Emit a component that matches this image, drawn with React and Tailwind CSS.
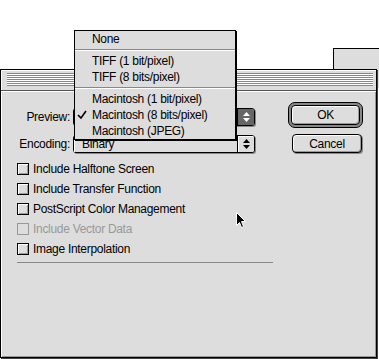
const font = "font-['Liberation_Sans',Arial,sans-serif] text-[12px] tracking-[-0.3px] leading-none";

const Arrows = ({ color }) => (
  <svg width="7" height="10" viewBox="0 0 7 10">
    <path d="M3.5 0 L7 4 L0 4 Z" fill={color} />
    <path d="M0 6 L7 6 L3.5 10 Z" fill={color} />
  </svg>
);

const Check = () => (
  <svg width="10" height="10" viewBox="0 0 10 10">
    <path d="M1 5 L4 8 L9 1" stroke="#000" strokeWidth="1.6" fill="none" />
  </svg>
);

const Cursor = () => (
  <svg width="11" height="17" viewBox="0 0 11 17">
    <path
      d="M0.5 0.5 L0.5 13.5 L3.5 10.5 L5.5 15.5 L7.5 14.5 L5.5 9.5 L9.5 9.5 Z"
      fill="#000"
      stroke="#fff"
      strokeWidth="1"
    />
  </svg>
);

const Popup = ({ label, value, pressed }) => (
  <div className="flex items-center">
    <div className="w-[72px] pr-[3px] text-right">{label}</div>
    <div className="flex h-[18px] w-[182px] rounded-[3px] border border-black bg-[#dddddd] shadow-[1px_1px_0_#888]">
      <div className="flex flex-1 items-center pl-[8px] shadow-[inset_1px_1px_0_#fff]">{value}</div>
      <div
        className={`flex w-[17px] items-center justify-center rounded-r-[2px] border-l border-black ${
          pressed ? "bg-[#666]" : "bg-[#dddddd] shadow-[inset_1px_1px_0_#fff]"
        }`}
      >
        <Arrows color={pressed ? "#fff" : "#000"} />
      </div>
    </div>
  </div>
);

const CheckRow = ({ label, disabled }) => (
  <div className="flex h-5 items-center gap-[4px]">
    <div
      className={`h-[12px] w-[12px] border ${
        disabled
          ? "border-[#999] bg-[#dddddd]"
          : "border-black bg-[#dddddd] shadow-[inset_1px_1px_0_#fff,inset_-1px_-1px_0_#999]"
      }`}
    />
    <span className={disabled ? "text-[#999]" : "text-black"}>{label}</span>
  </div>
);

const MenuItem = ({ children, checked }) => (
  <div className="relative flex h-4 items-center pl-[17px]">
    {checked && (
      <span className="absolute left-[2px] top-[3px]">
        <Check />
      </span>
    )}
    {children}
  </div>
);

const Sep = () => (
  <div className="flex h-[6px] items-center">
    <div className="h-[2px] w-full border-t border-[#888] border-b border-b-white" />
  </div>
);

export default function App() {
  return (
    <div className={`relative h-[359px] w-[379px] overflow-hidden bg-white text-black ${font}`}>
      {/* window behind */}
      <div className="absolute left-[333px] top-[48px] h-[40px] w-[60px] border-l border-t border-black bg-[#dddddd]" />

      {/* dialog */}
      <div className="absolute left-0 top-[69px] flex h-[289px] w-[377px] flex-col border border-black bg-[#dddddd] shadow-[1px_1px_0_#444]">
        <div className="h-[21px] border-b border-[#555] pt-[3px] shadow-[inset_1px_1px_0_#fff]">
          <div className="ml-[6px] mr-[3px] h-[13px] bg-[repeating-linear-gradient(to_bottom,#888_0,#888_1px,#fff_1px,#fff_2px)]" />
        </div>
        <div className="flex flex-1 shadow-[inset_1px_1px_0_#fff,inset_-1px_-1px_0_#999]">
          <div className="w-[287px]">
            <div className="mt-[17px]">
              <Popup label="Preview:" value="" pressed />
            </div>
            <div className="mt-[9px]">
              <Popup label="Encoding:" value="Binary" />
            </div>
            <div className="ml-[16px] mt-[6px]">
              <CheckRow label="Include Halftone Screen" />
              <CheckRow label="Include Transfer Function" />
              <CheckRow label="PostScript Color Management" />
              <CheckRow label="Include Vector Data" disabled />
              <CheckRow label="Image Interpolation" />
              <div className="mt-[3px] h-px w-[256px] bg-[#888]" />
            </div>
          </div>
          <div className="pt-[11px]">
            <div className="h-[26px] w-[75px] rounded-[7px] border border-black bg-[#888] p-[2px]">
              <div className="flex h-full items-center justify-center rounded-[4px] border border-black bg-[#dddddd] shadow-[inset_1px_1px_0_#fff,inset_-1px_-1px_0_#999]">
                OK
              </div>
            </div>
            <div className="ml-[4px] mt-[6px] flex h-[19px] w-[70px] items-center justify-center rounded-[4px] border border-black bg-[#dddddd] shadow-[inset_1px_1px_0_#fff,inset_-1px_-1px_0_#999,1px_1px_0_#888]">
              Cancel
            </div>
          </div>
        </div>
      </div>

      {/* popup menu */}
      <div className="absolute left-[74px] top-[30px] w-[162px] border border-black bg-[#dddddd] shadow-[1px_1px_0_#000]">
        <MenuItem>None</MenuItem>
        <Sep />
        <MenuItem>TIFF (1 bit/pixel)</MenuItem>
        <MenuItem>TIFF (8 bits/pixel)</MenuItem>
        <Sep />
        <MenuItem>Macintosh (1 bit/pixel)</MenuItem>
        <MenuItem checked>Macintosh (8 bits/pixel)</MenuItem>
        <MenuItem>Macintosh (JPEG)</MenuItem>
      </div>

      {/* cursor */}
      <div className="absolute left-[236px] top-[212px]">
        <Cursor />
      </div>
    </div>
  );
}
